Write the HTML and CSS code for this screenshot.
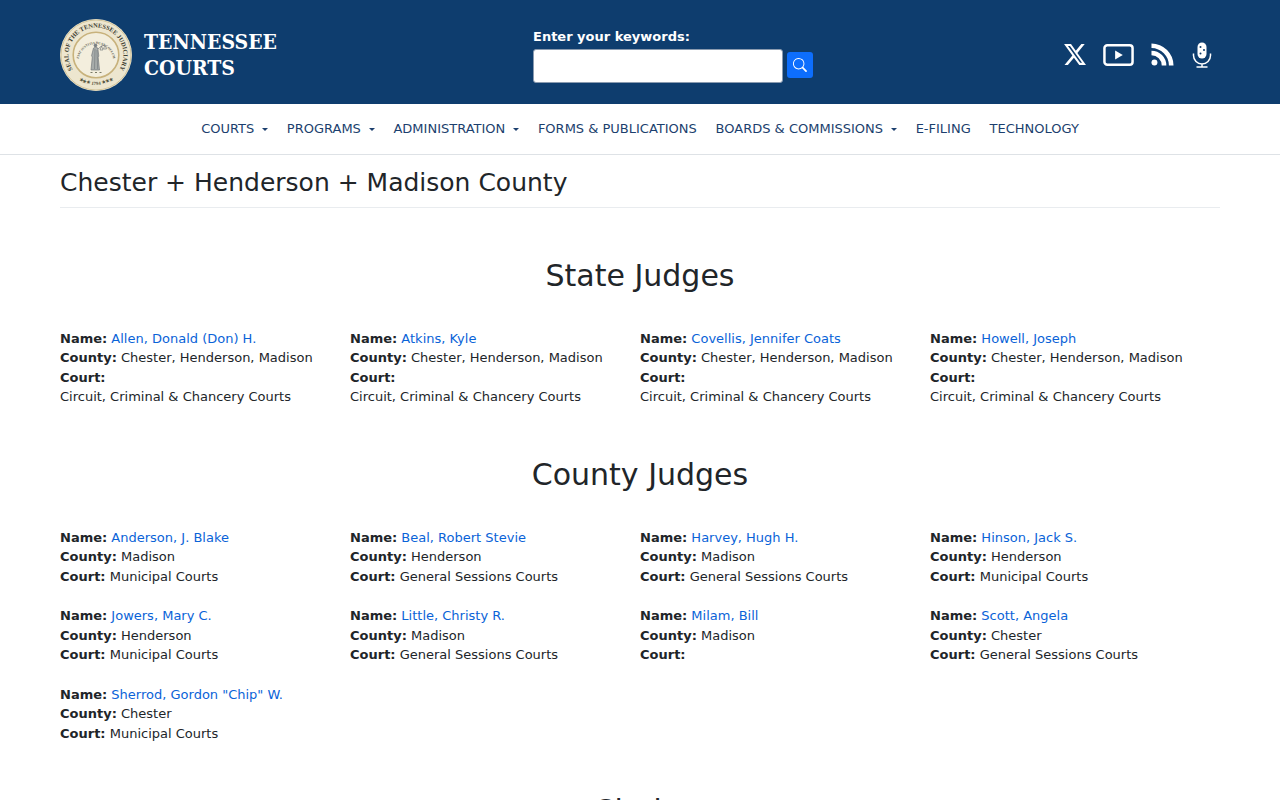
FILE: index.html
```html
<!DOCTYPE html>
<html lang="en">
<head>
  <meta charset="UTF-8" />
  <meta name="viewport" content="width=device-width, initial-scale=1.0" />
  <title>Chester + Henderson + Madison County | Tennessee Courts</title>
  <link rel="stylesheet" href="styles.css">
</head>
<body>
  <header class="site-header">
    <a class="brand" href="#">
      <svg class="seal" viewBox="0 0 72 72" aria-hidden="true">
        <defs>
          <path id="seal-top" d="M14.930 53.700A27.500 27.500 0 1 1 57.070 53.700"/>
          <path id="seal-bottom" d="M13 55.300A30 30 0 0 0 59 55.300"/>
          <path id="seal-inner" d="M19 39A17.300 17.300 0 0 1 53 39"/>
        </defs>
        <circle cx="36" cy="36" r="36" fill="#ede6cf"/>
        <circle cx="36" cy="36" r="35" fill="none" stroke="#d3c59b" stroke-width="1"/>
        <circle cx="36" cy="36" r="22.800" fill="#f3eedd" stroke="#c8b27c" stroke-width="1.600"/>
        <text class="seal-text"><textPath href="#seal-top" startOffset="50%" text-anchor="middle">SEAL OF THE TENNESSEE JUDICIARY</textPath></text>
        <text class="seal-date"><textPath href="#seal-bottom" startOffset="50%" text-anchor="middle">★★★ 1794 ★★★</textPath></text>
        <text class="seal-motto"><textPath href="#seal-inner" startOffset="50%" text-anchor="middle">FIAT JUSTITIA RUAT COELUM</textPath></text>
        <circle cx="35.500" cy="26.500" r="1.800" fill="#7b8184"/>
        <path d="M33.500 29l2-.8 2.300.8 1 8-.6 1.500 1.300 12.500h-8.500l1.300-13-.8-1.200z" fill="#a7acaa" stroke="#666c70" stroke-width=".6"/>
        <path d="M35 30l-.5 20M37 31l.6 19" stroke="#666c70" stroke-width=".5" fill="none"/>
        <path d="M38 30l3.500-3 3.500-1M41.500 27l-1.500 4h3zM45 26l-1.500 4h3z" stroke="#666c70" stroke-width=".6" fill="none"/>
        <path d="M30.500 53.500h2M35 53.500h2M39.500 53.500h2" stroke="#7a7a66" stroke-width="1"/>
      </svg>
      <span class="wordmark">TENNESSEE<br>COURTS</span>
    </a>

    <form class="search">
      <label for="keywords">Enter your keywords:</label>
      <div class="search-row">
        <input type="text" id="keywords">
        <button type="button" aria-label="Search">
          <svg viewBox="0 0 16 16" fill="currentColor"><path d="M11.742 10.344a6.500 6.500 0 1 0-1.397 1.398l3.850 3.850a1 1 0 0 0 1.415-1.414l-3.868-3.834zM12 6.500a5.500 5.500 0 1 1-11 0 5.500 5.500 0 0 1 11 0z"/></svg>
        </button>
      </div>
    </form>

    <div class="social">
      <a href="#" aria-label="X"><svg class="icon-x" viewBox="1.200 2.200 21.600 19.600" preserveAspectRatio="none" fill="#fff"><path d="M18.244 2.250h3.308l-7.227 8.260 8.502 11.240H16.170l-5.214-6.817L4.990 21.750H1.680l7.730-8.835L1.254 2.250H8.080l4.713 6.231zm-1.161 17.520h1.833L7.084 4.126H5.117z"/></svg></a>
      <a href="#" aria-label="YouTube"><svg class="icon-video" viewBox="0 0 32 23"><rect x="1.300" y="1.300" width="29.400" height="20.400" rx="3" fill="none" stroke="#fff" stroke-width="2.600"/><path d="M12.500 6.800v9.400l8-4.700z" fill="#fff"/></svg></a>
      <a href="#" aria-label="RSS"><svg class="icon-rss" viewBox="0 0 24 24" fill="#fff"><circle cx="3.600" cy="20.400" r="3.100"/><path d="M.5 8v4.800A10.700 10.700 0 0 1 11.200 23.500H16A15.500 15.500 0 0 0 .5 8z"/><path d="M.5.500v4.800a18.200 18.200 0 0 1 18.200 18.200h4.800A23 23 0 0 0 .5.500z"/></svg></a>
      <a href="#" aria-label="Podcast"><svg class="icon-mic" viewBox="0 0 20 26"><rect x="5.500" y="0.500" width="9" height="16" rx="4.500" fill="#fff"/><circle cx="8.500" cy="5" r="1" fill="#0e3d6e"/><circle cx="12" cy="8" r="1" fill="#0e3d6e"/><circle cx="8.500" cy="11.500" r="1" fill="#0e3d6e"/><path d="M1.500 11.500v2a8.500 8.500 0 0 0 17 0v-2M10 22v3M4.500 25h11" fill="none" stroke="#fff" stroke-width="1.500"/></svg></a>
    </div>
  </header>

  <nav class="main-nav">
    <a href="#" class="has-menu">Courts</a>
    <a href="#" class="has-menu">Programs</a>
    <a href="#" class="has-menu">Administration</a>
    <a href="#">Forms &amp; Publications</a>
    <a href="#" class="has-menu">Boards &amp; Commissions</a>
    <a href="#">E-Filing</a>
    <a href="#">Technology</a>
  </nav>

  <main class="content">
    <h1>Chester + Henderson + Madison County</h1>

    <h2>State Judges</h2>
    <div class="people">
      <div class="person"><b>Name:</b> <a href="#">Allen, Donald (Don) H.</a><br><b>County:</b> Chester, Henderson, Madison<br><b>Court:</b><br>Circuit, Criminal &amp; Chancery Courts</div>
      <div class="person"><b>Name:</b> <a href="#">Atkins, Kyle</a><br><b>County:</b> Chester, Henderson, Madison<br><b>Court:</b><br>Circuit, Criminal &amp; Chancery Courts</div>
      <div class="person"><b>Name:</b> <a href="#">Covellis, Jennifer Coats</a><br><b>County:</b> Chester, Henderson, Madison<br><b>Court:</b><br>Circuit, Criminal &amp; Chancery Courts</div>
      <div class="person"><b>Name:</b> <a href="#">Howell, Joseph</a><br><b>County:</b> Chester, Henderson, Madison<br><b>Court:</b><br>Circuit, Criminal &amp; Chancery Courts</div>
    </div>

    <h2>County Judges</h2>
    <div class="people">
      <div class="person"><b>Name:</b> <a href="#">Anderson, J. Blake</a><br><b>County:</b> Madison<br><b>Court:</b> Municipal Courts</div>
      <div class="person"><b>Name:</b> <a href="#">Beal, Robert Stevie</a><br><b>County:</b> Henderson<br><b>Court:</b> General Sessions Courts</div>
      <div class="person"><b>Name:</b> <a href="#">Harvey, Hugh H.</a><br><b>County:</b> Madison<br><b>Court:</b> General Sessions Courts</div>
      <div class="person"><b>Name:</b> <a href="#">Hinson, Jack S.</a><br><b>County:</b> Henderson<br><b>Court:</b> Municipal Courts</div>
      <div class="person"><b>Name:</b> <a href="#">Jowers, Mary C.</a><br><b>County:</b> Henderson<br><b>Court:</b> Municipal Courts</div>
      <div class="person"><b>Name:</b> <a href="#">Little, Christy R.</a><br><b>County:</b> Madison<br><b>Court:</b> General Sessions Courts</div>
      <div class="person"><b>Name:</b> <a href="#">Milam, Bill</a><br><b>County:</b> Madison<br><b>Court:</b></div>
      <div class="person"><b>Name:</b> <a href="#">Scott, Angela</a><br><b>County:</b> Chester<br><b>Court:</b> General Sessions Courts</div>
      <div class="person"><b>Name:</b> <a href="#">Sherrod, Gordon "Chip" W.</a><br><b>County:</b> Chester<br><b>Court:</b> Municipal Courts</div>
    </div>

    <h2>Clerks</h2>
  </main>
</body>
</html>
```

FILE: styles.css
```css
body {
  font-family: "DejaVu Sans", sans-serif;
  font-size: 13px;
  line-height: 1.5;
  color: #212529;
  background: #fff;
  margin: 0;
  padding: 0;
}
a {
  text-decoration: none;
}

.site-header {
  height: 104px;
  box-sizing: border-box;
  background: #0e3d6e;
  padding: 5px 60px 0;
  display: grid;
  grid-template-columns: 473px 1fr auto;
  align-items: center;
}
.brand {
  display: flex;
  align-items: center;
  gap: 12px;
  color: #fff;
}
.seal {
  width: 72px;
  height: 72px;
  flex: none;
}
.seal-text {
  font-family: "Liberation Serif", serif;
  font-size: 6.300px;
  font-weight: bold;
  fill: #3f3f33;
}
.seal-date {
  font-family: "Liberation Serif", serif;
  font-size: 4.800px;
  font-weight: bold;
  fill: #55553f;
}
.seal-motto {
  font-family: "Liberation Serif", serif;
  font-size: 3.300px;
  font-weight: bold;
  fill: #5c5c50;
}
.wordmark {
  font-family: "DejaVu Serif Condensed", "DejaVu Serif", serif;
  font-size: 21px;
  font-weight: 700;
  line-height: 26px;
  padding-top: 1px;
}

.search {
  margin-top: 1px;
}
.search label {
  display: block;
  color: #fff;
  font-weight: bold;
  margin-bottom: 3px;
}
.search-row {
  display: flex;
  align-items: flex-start;
  gap: 4px;
}
.search input {
  width: 250px;
  height: 34px;
  box-sizing: border-box;
  border: 1px solid #8a9bb0;
  border-radius: 3px;
  background: #fff;
}
.search button {
  width: 26px;
  height: 26px;
  margin-top: 3px;
  padding: 0;
  border: none;
  border-radius: 3px;
  background: #0d6efd;
  color: #fff;
  display: flex;
  align-items: center;
  justify-content: center;
}
.search button svg {
  width: 14px;
  height: 14px;
}

.social {
  display: flex;
  align-items: center;
  gap: 17px;
  padding-right: 8px;
}
.social a {
  display: flex;
}
.icon-x {
  width: 22px;
  height: 21px;
}
.icon-video {
  width: 31px;
  height: 22px;
}
.icon-rss {
  width: 23px;
  height: 23px;
}
.icon-mic {
  width: 20px;
  height: 26px;
  margin-left: 1px;
}

.main-nav {
  height: 50px;
  border-bottom: 1px solid #dee2e6;
  display: flex;
  justify-content: center;
  align-items: center;
  gap: 18.800px;
}
.main-nav a {
  color: #1c3f6e;
  text-transform: uppercase;
}
.has-menu::after {
  content: "";
  display: inline-block;
  margin-left: 7.800px;
  vertical-align: 2px;
  border-top: 3px solid;
  border-left: 3px solid transparent;
  border-right: 3px solid transparent;
}

.content {
  padding: 0 60px;
}
h1 {
  font-size: 25px;
  font-weight: 400;
  line-height: 30px;
  margin: 0;
  padding: 13px 0 8.600px;
  border-bottom: 1px solid #e9ecef;
}
h2 {
  font-size: 30px;
  font-weight: 400;
  line-height: 36px;
  text-align: center;
  margin: 50px 0 35px;
}
.people {
  display: grid;
  grid-template-columns: repeat(4, 1fr);
  row-gap: 20px;
}
.person a {
  color: #0a63d8;
}
```
